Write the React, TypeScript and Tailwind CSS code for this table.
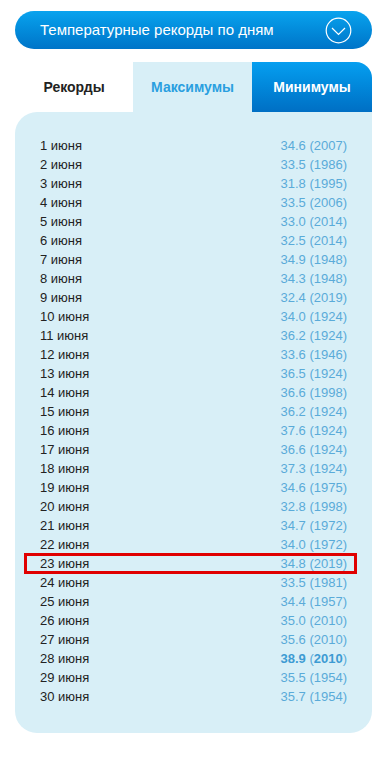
import React from "react";

const rows: [string, string, string, boolean?][] = [
  ["1 июня", "34.6", "2007"],
  ["2 июня", "33.5", "1986"],
  ["3 июня", "31.8", "1995"],
  ["4 июня", "33.5", "2006"],
  ["5 июня", "33.0", "2014"],
  ["6 июня", "32.5", "2014"],
  ["7 июня", "34.9", "1948"],
  ["8 июня", "34.3", "1948"],
  ["9 июня", "32.4", "2019"],
  ["10 июня", "34.0", "1924"],
  ["11 июня", "36.2", "1924"],
  ["12 июня", "33.6", "1946"],
  ["13 июня", "36.5", "1924"],
  ["14 июня", "36.6", "1998"],
  ["15 июня", "36.2", "1924"],
  ["16 июня", "37.6", "1924"],
  ["17 июня", "36.6", "1924"],
  ["18 июня", "37.3", "1924"],
  ["19 июня", "34.6", "1975"],
  ["20 июня", "32.8", "1998"],
  ["21 июня", "34.7", "1972"],
  ["22 июня", "34.0", "1972"],
  ["23 июня", "34.8", "2019"],
  ["24 июня", "33.5", "1981"],
  ["25 июня", "34.4", "1957"],
  ["26 июня", "35.0", "2010"],
  ["27 июня", "35.6", "2010"],
  ["28 июня", "38.9", "2010", true],
  ["29 июня", "35.5", "1954"],
  ["30 июня", "35.7", "1954"],
];

export default function App() {
  return (
    <div
      className="w-[387px] h-[765px] bg-white pt-[11px] px-[15px]"
      style={{ fontFamily: '"Liberation Sans", Arial, sans-serif' }}
    >
      <div className="h-[38px] rounded-full bg-gradient-to-b from-[#0aa3ee] to-[#0074c8] flex items-center justify-between pl-[25px] pr-[20px]">
        <span className="text-white text-[15px]">Температурные рекорды по дням</span>
        <svg width="27" height="27" viewBox="0 0 27 27">
          <circle cx="13.5" cy="13.5" r="12.3" fill="none" stroke="white" strokeWidth="1.2" />
          <path d="M7 11 L13.5 17.5 L20 11" fill="none" stroke="white" strokeWidth="1.2" />
        </svg>
      </div>
      <div className="mt-[13px] flex h-[50px]">
        <div className="w-[119px] bg-white flex items-center justify-center text-[14px] font-bold text-[#222]">
          Рекорды
        </div>
        <div className="w-[120px] bg-[#d8eff7] flex items-center justify-center text-[14px] font-bold text-[#2a9fe0]">
          Максимумы
        </div>
        <div className="w-[121px] rounded-tr-[16px] bg-gradient-to-b from-[#069ff0] to-[#006fc4] flex items-center justify-center text-[14px] font-bold text-white">
          Минимумы
        </div>
      </div>
      <div className="bg-[#d8eff7] rounded-tl-[22px] rounded-b-[22px] pt-[24px] pb-[27px] pl-[10px] pr-[16px]">
        {rows.map(([d, v, y, b]) => {
          const hl = d === "23 июня";
          return (
            <div
              key={d}
              className={
                "h-[19px] flex items-center justify-between text-[13px] leading-[19px] pl-[15px] pr-[9px] " +
                (hl ? "outline outline-[3px] outline-[#e00000] -outline-offset-[2px]" : "")
              }
            >
              <span className="text-[#222]">{d}</span>
              <span className="text-[#5aabd9]">
                {b ? (
                  <>
                    <b className="text-[#3d9bd3]">{v}</b> (<b className="text-[#3d9bd3]">{y}</b>)
                  </>
                ) : (
                  <>
                    {v} ({y})
                  </>
                )}
              </span>
            </div>
          );
        })}
      </div>
    </div>
  );
}
